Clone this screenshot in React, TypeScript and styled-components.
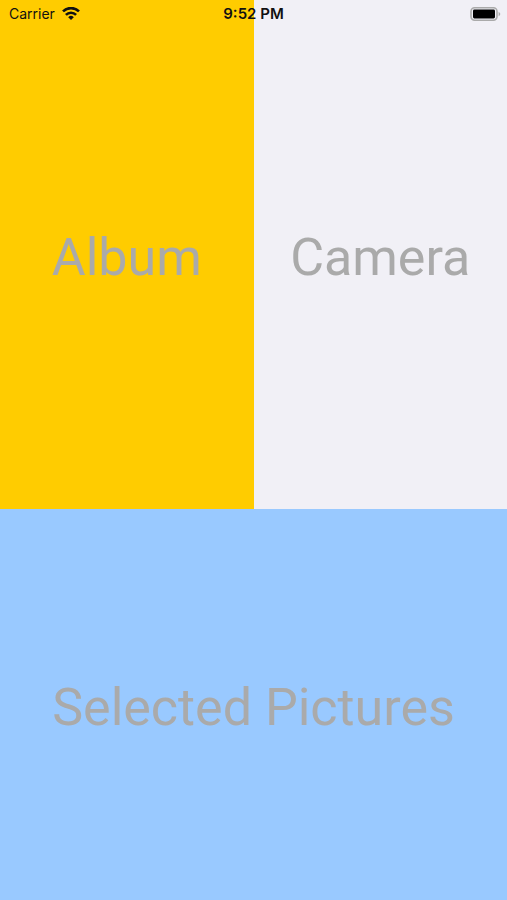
import React from "react";
import styled, { createGlobalStyle } from "styled-components";

const GlobalStyle = createGlobalStyle`
  * { box-sizing: border-box; }
  body { margin: 0; font-family: Inter, Roboto, sans-serif; }
`;

const Screen = styled.main`
  display: grid;
  grid-template-rows: 509fr 391fr;
  min-height: 100vh;
`;

const StatusBar = styled.header`
  position: absolute;
  top: 0;
  left: 0;
  right: 0;
  display: grid;
  grid-template-columns: 1fr auto 1fr;
  align-items: center;
  height: 27px;
  padding: 0 6px;
  color: #111;
  font-size: 14px;
  pointer-events: none;
`;

const Network = styled.div`
  display: flex;
  align-items: center;
  gap: 7px;
  padding-left: 3px;
`;

const Time = styled.time`
  font-size: 15px;
  font-weight: 600;
`;

const Battery = styled.svg`
  justify-self: end;
`;

const Sources = styled.div`
  display: grid;
  grid-template-columns: 1fr 1fr;
`;

const Tile = styled.button<{ $fill: string }>`
  border: 0;
  padding: 6px 0 0;
  background: ${(p) => p.$fill};
  color: #aaa;
  font-family: Roboto, sans-serif;
  font-size: 52px;
  font-weight: 400;
  line-height: 64px;
  white-space: nowrap;
  cursor: pointer;
`;

export default function App() {
  return (
    <>
      <GlobalStyle />
      <Screen>
        <Sources>
          <Tile $fill="#ffcc00">Album</Tile>
          <Tile $fill="#f1f0f6">Camera</Tile>
        </Sources>
        <Tile $fill="#99c9ff">Selected Pictures</Tile>
      </Screen>
      <StatusBar>
        <Network>
          <span>Carrier</span>
          <svg width="18" height="14" viewBox="0 0 18 14" fill="none" stroke="#111" strokeWidth="2.6" aria-label="Wi-Fi">
            <path d="M1 4.4a11.3 11.3 0 0 1 16 0M3.9 7.9a7.2 7.2 0 0 1 10.2 0" />
            <path d="M6.2 10.2a4 4 0 0 1 5.6 0L9 13.1z" fill="#111" stroke="none" />
          </svg>
        </Network>
        <Time>9:52 PM</Time>
        <Battery width="31" height="14" viewBox="0 0 31 14" aria-label="Battery full">
          <rect x="1" y="0.8" width="26" height="12.4" rx="3.6" fill="none" stroke="#aaa" strokeWidth="1.6" />
          <rect x="3" y="2.6" width="22" height="8.8" rx="1.4" fill="#000" />
          <path d="M28.6 4.7q3.4 2.3 0 4.6z" fill="#aaa" />
        </Battery>
      </StatusBar>
    </>
  );
}
